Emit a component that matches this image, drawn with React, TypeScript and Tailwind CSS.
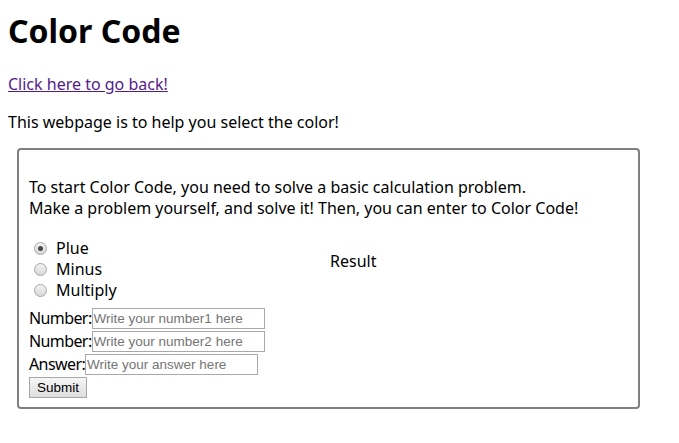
import React, { useState } from 'react';

const ops = ['Plue', 'Minus', 'Multiply'];

function Radio({ checked }: { checked: boolean }) {
  return (
    <span className="ml-[5px] mr-[3px] flex h-[13px] w-[13px] items-center justify-center rounded-full border border-[#a6a6a6] bg-gradient-to-b from-[#f2f2f2] to-[#d8d8d8]">
      {checked && <span className="h-[5px] w-[5px] rounded-full bg-[#4a4a4a]" />}
    </span>
  );
}

export default function App() {
  const [op, setOp] = useState('Plue');

  return (
    <div className="min-h-[443px] bg-white px-2 text-[16px] leading-[21px] text-black [font-family:'Noto_Sans','Open_Sans',sans-serif]">
      <h1 className="pt-[10px] text-[32px] font-bold leading-[42px]">Color Code</h1>

      <a href="#" className="mt-[22px] block w-fit text-[#551a8b] underline leading-[21px]">
        Click here to go back!
      </a>

      <p className="mt-[17px] leading-[21px]">This webpage is to help you select the color!</p>

      <div className="ml-[9px] mt-[15px] w-[623px] rounded-[4px] border-2 border-[#808080] px-[10px] pb-[9px] pt-[27px]">
        <p className="leading-[21px]">
          To start Color Code, you need to solve a basic calculation problem.
          <br />
          Make a problem yourself, and solve it! Then, you can enter to Color Code!
        </p>

        <div className="mt-[19px] flex">
          <div className="w-[301px]">
            {ops.map((o) => (
              <label key={o} className="flex h-[21px] items-center" onClick={() => setOp(o)}>
                <Radio checked={op === o} />
                <span className="ml-[6px]">{o}</span>
              </label>
            ))}
          </div>
          <div className="pt-[13px]">Result</div>
        </div>

        <div className="mt-[6px]">
          <div className="flex h-[23px] items-center">
            <span className="tracking-[-0.6px]">Number:</span>
            <input
              placeholder="Write your number1 here"
              className="h-[21px] w-[173px] border border-[#a9a9a9] px-[1px] text-[13.5px] [font-family:'Liberation_Sans',Arial,sans-serif] placeholder:text-[#757575] outline-none"
            />
          </div>
          <div className="flex h-[23px] items-center">
            <span className="tracking-[-0.6px]">Number:</span>
            <input
              placeholder="Write your number2 here"
              className="h-[21px] w-[173px] border border-[#a9a9a9] px-[1px] text-[13.5px] [font-family:'Liberation_Sans',Arial,sans-serif] placeholder:text-[#757575] outline-none"
            />
          </div>
          <div className="flex h-[23px] items-center">
            <span className="tracking-[-0.6px]">Answer:</span>
            <input
              placeholder="Write your answer here"
              className="h-[21px] w-[173px] border border-[#a9a9a9] px-[1px] text-[13.5px] [font-family:'Liberation_Sans',Arial,sans-serif] placeholder:text-[#757575] outline-none"
            />
          </div>
          <button className="mt-[1px] h-[21px] w-[58px] border border-[#a6a6a6] bg-gradient-to-b from-[#f6f6f6] to-[#dedede] text-[13.5px] leading-[19px] [font-family:'Liberation_Sans',Arial,sans-serif]">
            Submit
          </button>
        </div>
      </div>
    </div>
  );
}
